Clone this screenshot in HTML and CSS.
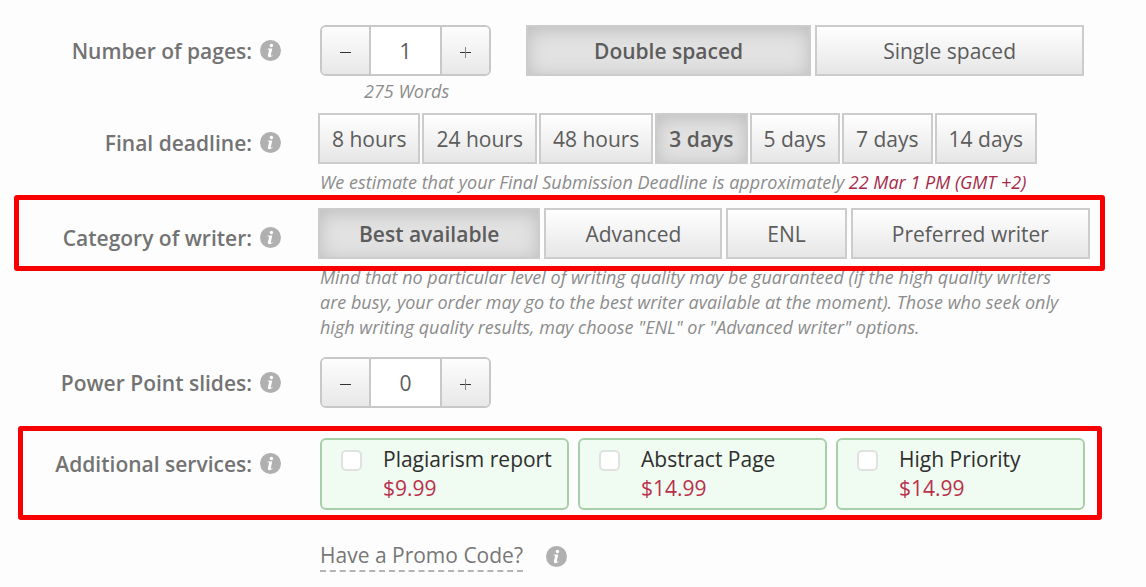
FILE: index.html
```html
<!DOCTYPE html>
<html lang="en">
<head>
<meta charset="utf-8">
<title>Order details</title>
<link rel="stylesheet" href="styles.css">
</head>
<body>
<svg class="sprite" aria-hidden="true">
  <symbol id="info" viewBox="0 0 21 21">
    <circle cx="10.5" cy="10.5" r="10.5" fill="#b0b0b0"/>
    <circle cx="11.4" cy="5.5" r="1.7" fill="#fff"/>
    <path d="M7.8 8.5h4.5l-1.5 6.5q-.2.9.5.8l1.4-.5-.2.8q-1.600 1.100-3.100 1.100-1.900 0-1.500-1.900l1.200-5.400q.1-.5-.4-.5h-1.100z" fill="#fff"/>
  </symbol>
  <symbol id="minus" viewBox="0 0 11 11"><path d="M0 5.500h11" stroke="#333"/></symbol>
  <symbol id="plus" viewBox="0 0 11 11"><path d="M0 5.500h11" stroke="#333"/><path d="M5.500 0v11" stroke="#888"/></symbol>
</svg>
<form class="order">
  <div class="row">
    <div class="label"><label for="pages">Number of pages:</label><svg class="info"><use href="#info"/></svg></div>
    <div class="controls spacing">
      <div class="stepper">
        <button type="button" aria-label="Fewer pages"><svg class="sign"><use href="#minus"/></svg></button>
        <input id="pages" type="text" value="1">
        <button type="button" aria-label="More pages"><svg class="sign"><use href="#plus"/></svg></button>
      </div>
      <div class="options wide">
        <button type="button" class="option active">Double spaced</button>
        <button type="button" class="option">Single spaced</button>
      </div>
    </div>
  </div>
  <p class="hint words">275 Words</p>

  <div class="row deadline">
    <div class="label lowered"><span>Final deadline:</span><svg class="info"><use href="#info"/></svg></div>
    <div class="options compact">
      <button type="button" class="option">8 hours</button>
      <button type="button" class="option">24 hours</button>
      <button type="button" class="option">48 hours</button>
      <button type="button" class="option active">3 days</button>
      <button type="button" class="option">5 days</button>
      <button type="button" class="option">7 days</button>
      <button type="button" class="option">14 days</button>
    </div>
  </div>
  <p class="hint">We estimate that your Final Submission Deadline is approximately <span class="date">22 Mar 1 PM (GMT +2)</span></p>

  <div class="row writer highlight">
    <div class="label lowered"><span>Category of writer:</span><svg class="info"><use href="#info"/></svg></div>
    <div class="options medium">
      <button type="button" class="option active">Best available</button>
      <button type="button" class="option">Advanced</button>
      <button type="button" class="option">ENL</button>
      <button type="button" class="option">Preferred writer</button>
    </div>
  </div>
  <p class="hint">Mind that no particular level of writing quality may be guaranteed (if the high quality writers are busy, your order may go to the best writer available at the moment). Those who seek only high writing quality results, may choose "ENL" or "Advanced writer" options.</p>

  <div class="row slides">
    <div class="label"><label for="slides">Power Point slides:</label><svg class="info"><use href="#info"/></svg></div>
    <div class="controls">
      <div class="stepper">
        <button type="button" aria-label="Fewer slides"><svg class="sign"><use href="#minus"/></svg></button>
        <input id="slides" type="text" value="0">
        <button type="button" aria-label="More slides"><svg class="sign"><use href="#plus"/></svg></button>
      </div>
    </div>
  </div>

  <div class="row services highlight">
    <div class="label"><span>Additional services:</span><svg class="info"><use href="#info"/></svg></div>
    <div class="cards">
      <label class="card"><input type="checkbox"><span class="text">Plagiarism report<span class="price">$9.99</span></span></label>
      <label class="card"><input type="checkbox"><span class="text">Abstract Page<span class="price">$14.99</span></span></label>
      <label class="card"><input type="checkbox"><span class="text">High Priority<span class="price">$14.99</span></span></label>
    </div>
  </div>

  <div class="promo">
    <a href="#promo">Have a Promo Code?</a><svg class="info"><use href="#info"/></svg>
  </div>
</form>
</body>
</html>
```
FILE: styles.css
```css
* { box-sizing: border-box; }

body {
  margin: 0;
  background: #fdfdfd;
  color: #5c5c5c;
  font-family: "Open Sans", sans-serif;
  font-size: 21px;
}

button, input { font: inherit; color: inherit; margin: 0; }

.sprite { display: none; }

.info { flex: none; width: 21px; height: 21px; }

.order { padding-top: 25px; }

.row {
  display: grid;
  grid-template-columns: 281px minmax(0, 768px);
  column-gap: 39px;
  align-items: start;
  position: relative;
}

.deadline { margin-top: 9px; }
.writer { margin-top: 13px; }
.slides { margin-top: 17px; }
.services { margin-top: 30px; }

.label {
  display: flex;
  justify-content: flex-end;
  align-items: center;
  gap: 8px;
  height: 51px;
  color: #737373;
  font-weight: 600;
  white-space: nowrap;
}

.lowered { height: 59px; margin-bottom: -8px; }

.controls { display: flex; }
.spacing { gap: 35px; }

.stepper {
  display: flex;
  width: 171px;
  height: 51px;
  border: 2px solid #c8c8c8;
  border-radius: 6px;
  overflow: hidden;
}

.stepper button {
  display: flex;
  align-items: center;
  justify-content: center;
  width: 47px;
  padding: 4px 0 0;
  border: 0;
  background: linear-gradient(#fdfdfd, #e8e8e8);
}

.sign { width: 11px; height: 11px; }

.stepper input {
  flex: 1;
  min-width: 0;
  padding: 0;
  border: solid #c8c8c8;
  border-width: 0 2px;
  background: #fff;
  text-align: center;
}

.options { display: flex; gap: 4px; }
.compact, .medium { margin-left: -2px; }
.compact { gap: 2px; }

.option {
  flex: none;
  height: 51px;
  padding: 0 12px;
  border: 2px solid #cccccc;
  background: linear-gradient(#fff, #e6e6e6);
  white-space: nowrap;
}

.wide .option { padding: 0 66px; }
.medium .option { padding: 0 39px; }

.option.active {
  background: #e2e2e2;
  box-shadow: inset 0 3px 18px #bcbcbc;
  font-weight: 600;
}

.hint {
  max-width: 1070px;
  margin: 6px 0 0;
  padding-left: 320px;
  color: #8c8c8c;
  font-size: 18px;
  line-height: 25px;
  font-style: italic;
}

.words { margin-top: 3px; padding-left: 364px; }
.date { color: #a52a48; }

.highlight { z-index: 1; }

.highlight::after {
  content: "";
  position: absolute;
  inset: -13px 41px -12px 14px;
  border: 5px solid #f80000;
  border-radius: 3px;
  pointer-events: none;
}

.services::after { inset: -12px 44px -10px 18px; }

.cards { display: flex; gap: 9px; max-width: 765px; }

.card {
  display: flex;
  flex: 1;
  gap: 21px;
  padding: 5px 0 5px 19px;
  border: 2px solid #a8d0a8;
  border-radius: 6px;
  background: #f0fbf1;
  color: #2e2e2e;
  line-height: 29px;
  white-space: nowrap;
}

.card input {
  appearance: none;
  flex: none;
  width: 21px;
  height: 21px;
  margin-top: 5px;
  border: 2px solid #dfe2df;
  border-radius: 5px;
  background: #fff;
}

.price { display: block; color: #b8304c; }

.promo {
  display: flex;
  align-items: center;
  gap: 23px;
  margin-top: 30px;
  padding-left: 320px;
  line-height: 30px;
}

.promo a {
  border-bottom: 2px dashed #b4b4b4;
  color: #777;
  text-decoration: none;
}
```
